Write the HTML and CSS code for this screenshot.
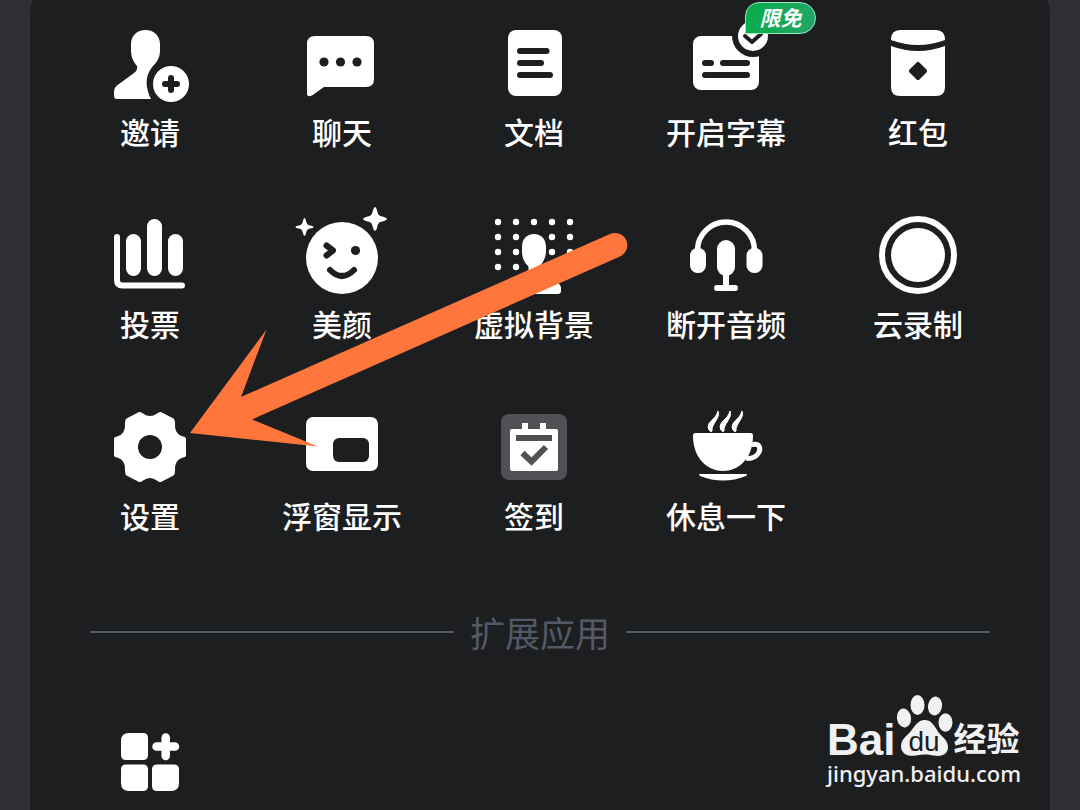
FILE: index.html
```html
<!DOCTYPE html>
<html lang="zh-CN">
<head>
<meta charset="utf-8">
<meta name="viewport" content="width=device-width, initial-scale=1">
<title>会议工具</title>
<link rel="stylesheet" href="styles.css">
</head>
<body>
<main class="panel">
  <section class="grid">
    <button class="tile" type="button">
      <span class="icon"><svg viewBox="102 15 96 96" aria-hidden="true">
        <path d="M145.500 30C154 30 160 36 160 44V50C160 58 157 62 153 66C147 73 146 80 147 87C148 92 149 95 151 99H117Q114 99 114 96V92C114 88 116 86 119 84L134 73Q138 70 137 66C133 61 131 57 131 50V44C131 36 137 30 145.500 30Z"/>
        <circle cx="171" cy="84" r="18"/>
        <path class="cut" stroke-width="6" d="M165 84H177M171 78V90"/>
      </svg></span>
      <span class="label">邀请</span>
    </button>
    <button class="tile" type="button">
      <span class="icon"><svg viewBox="294 15 96 96" aria-hidden="true">
        <path d="M315 36H366Q374 36 374 44V79Q374 87 366 87H324L312 95.500Q307 98 307 93V44Q307 36 315 36Z"/>
        <g class="hole"><circle cx="324" cy="62" r="4.600"/><circle cx="340.500" cy="62" r="4.600"/><circle cx="357" cy="62" r="4.600"/></g>
      </svg></span>
      <span class="label">聊天</span>
    </button>
    <button class="tile" type="button">
      <span class="icon"><svg viewBox="486 15 96 96" aria-hidden="true">
        <rect x="508" y="30" width="54" height="66" rx="8"/>
        <path class="cut" stroke-width="6" d="M520 51H546.500M520 63H541M520 75H550"/>
      </svg></span>
      <span class="label">文档</span>
    </button>
    <button class="tile" type="button">
      <span class="icon"><svg viewBox="678 15 96 96" aria-hidden="true">
        <rect x="693" y="36" width="66" height="54" rx="8"/>
        <circle class="hole" cx="753" cy="36" r="21"/>
        <circle cx="753" cy="36" r="15"/>
        <path class="cut" stroke-width="4" d="M745 36L752 42L761 34"/>
        <path class="cut" stroke-width="6" d="M705 63H711M723 63H747M705 75H747"/>
      </svg><span class="badge">限免</span></span>
      <span class="label">开启字幕</span>
    </button>
    <button class="tile" type="button">
      <span class="icon"><svg viewBox="870 15 96 96" aria-hidden="true">
        <path d="M900 30H936Q945 30 945 40Q918 50 891 40Q891 30 900 30Z"/>
        <path d="M891 46Q918 56 945 46V87Q945 96 936 96H900Q891 96 891 87Z"/>
        <rect class="hole" x="911" y="64" width="14" height="14" rx="2" transform="rotate(45 918 71)"/>
      </svg></span>
      <span class="label">红包</span>
    </button>

    <button class="tile" type="button">
      <span class="icon"><svg viewBox="102 207 96 96" aria-hidden="true">
        <path class="line" stroke-width="6" d="M117 237V280Q117 285.500 122.500 285.500H182"/>
        <rect x="126" y="234" width="15" height="42" rx="7.500"/>
        <rect x="147" y="219" width="15" height="57" rx="7.500"/>
        <rect x="168" y="234" width="15" height="42" rx="7.500"/>
      </svg></span>
      <span class="label">投票</span>
    </button>
    <button class="tile" type="button">
      <span class="icon"><svg viewBox="294 207 96 96" aria-hidden="true">
        <circle cx="342" cy="258" r="36"/>
        <path d="M375 207Q376 207 377 210C378 215 379 216 384 217Q387 218 387 219Q387 220 384 221C379 222 378 223 377 228Q376 231 375 231Q374 231 373 228C372 223 371 222 366 221Q363 220 363 219Q363 218 366 217C371 216 372 215 373 210Q374 207 375 207Z"/>
        <path d="M304.500 218Q305.500 218 306 221C307 224 307.500 225 310 225.500Q313.500 226 313.500 227Q313.500 228 310 228.500C307.500 229 307 230 306 233Q305.500 236 304.500 236Q303.500 236 303 233C302 230 301.500 229 299 228.500Q295.500 228 295.500 227Q295.500 226 299 225.500C301.500 225 302 224 303 221Q303.500 218 304.500 218Z"/>
        <path class="cut" stroke-width="6" d="M326.500 245.500L333 250.500L326.500 255.500"/>
        <circle class="hole" cx="355.500" cy="250.500" r="4.600"/>
        <path class="cut" stroke-width="6" d="M330 270Q342 282 354 270"/>
      </svg></span>
      <span class="label">美颜</span>
    </button>
    <button class="tile" type="button">
      <span class="icon"><svg viewBox="486 207 96 96" aria-hidden="true">
        <path class="line" stroke-width="6.400" stroke-dasharray="0 18" d="M498 222H571M498 237H517M552 237H571M498 252H517M552 252H571M498 267H517M552 267H571"/>
        <path d="M534 234C541 234 546 239 546 247V251C546 258 543 262 540 266Q538 270 542 273L557 282Q561 285 561 288V291Q561 294 558 294H510Q507 294 507 291V288Q507 285 511 282L526 273Q530 270 528 266C524 262 522 258 522 251V247C522 239 527 234 534 234Z"/>
      </svg></span>
      <span class="label">虚拟背景</span>
    </button>
    <button class="tile" type="button">
      <span class="icon"><svg viewBox="678 207 96 96" aria-hidden="true">
        <path class="line" stroke-width="5.500" d="M697.500 252V250.500A28.500 28.500 0 0 1 754.500 250.500V252"/>
        <rect x="690" y="248" width="16" height="25" rx="7.500"/>
        <rect x="746.500" y="248" width="16" height="25" rx="7.500"/>
        <rect x="717" y="240" width="18" height="36" rx="9"/>
        <path class="line" stroke-width="6" d="M726 272V288M717 288H735"/>
      </svg></span>
      <span class="label">断开音频</span>
    </button>
    <button class="tile" type="button">
      <span class="icon"><svg viewBox="870 207 96 96" aria-hidden="true">
        <circle class="line" stroke-width="6" cx="918" cy="255" r="36"/>
        <circle cx="918" cy="255" r="27"/>
      </svg></span>
      <span class="label">云录制</span>
    </button>

    <button class="tile" type="button">
      <span class="icon"><svg viewBox="102 399 96 96" aria-hidden="true">
        <path d="M139 412Q141 411.500 143 413.500Q150 418.500 157 413.500Q159 411.500 161 412L173.500 418.500Q175 419.500 175 423Q174 434 183 436.500Q186 437 186 439V455Q186 457 183 457.500Q174 460 175 471Q175 474.500 173.500 475.500L161 482Q159 482.500 157 480.500Q150 475.500 143 480.500Q141 482.500 139 482L126.500 475.500Q125 474.500 125 471Q126 460 117 457.500Q114 457 114 455V439Q114 437 117 436.500Q126 434 125 423Q125 419.500 126.500 418.500Z"/>
        <circle class="hole" cx="150" cy="447" r="12"/>
      </svg></span>
      <span class="label">设置</span>
    </button>
    <button class="tile" type="button">
      <span class="icon"><svg viewBox="294 399 96 96" aria-hidden="true">
        <rect x="306" y="417" width="72" height="54" rx="7"/>
        <rect class="hole" x="333" y="438" width="36" height="24" rx="6"/>
      </svg></span>
      <span class="label">浮窗显示</span>
    </button>
    <button class="tile" type="button">
      <span class="icon"><svg viewBox="486 399 96 96" aria-hidden="true">
        <rect class="plate" x="501" y="414" width="66" height="66" rx="8"/>
        <path d="M512 429H522V423H528V429H540V423H546V429H556Q558 429 558 431V469Q558 471 556 471H512Q510 471 510 469V431Q510 429 512 429Z"/>
        <rect class="plate" x="516" y="435" width="36" height="6"/>
        <path class="tick" d="M522.500 453L531.500 461.500L546 447"/>
      </svg></span>
      <span class="label">签到</span>
    </button>
    <button class="tile" type="button">
      <span class="icon"><svg viewBox="678 399 96 96" aria-hidden="true">
        <path d="M695 433H751Q753 433 753 435.500C753 459 738 471 723 471C708 471 693 459 693 435.500Q693 433 695 433Z"/>
        <path class="line" stroke-width="5" d="M753 444.500C760 443 761 449 758.500 453C756 457 752 458.500 748 458.500"/>
        <path d="M700 474H746Q748 474 746 476C738 479 731 480.500 723 480.500C715 480.500 708 479 700 476Q698 474 700 474Z"/>
        <g class="steam"><path d="M718 411C721 418 711 424 712 431Q711 433 709 430C705 422 716 420 718 411Z"/><path d="M730 411C733 418 723 424 724 431Q723 433 721 430C717 422 728 420 730 411Z"/><path d="M742 411C745 418 735 424 736 431Q735 433 733 430C729 422 740 420 742 411Z"/></g>
      </svg></span>
      <span class="label">休息一下</span>
    </button>
  </section>

  <h2 class="divider">扩展应用</h2>

  <section class="grid">
    <button class="tile" type="button" aria-label="添加应用">
      <span class="icon"><svg viewBox="102 714 96 96" aria-hidden="true">
        <path d="M129 733H143Q148 733 148 738V755Q148 760 143 760H126Q121 760 121 755V741Q121 733 129 733Z"/>
        <path d="M126 764.500H143Q148 764.500 148 769.500V786Q148 791 143 791H129Q121 791 121 783V769.500Q121 764.500 126 764.500Z"/>
        <path d="M157 764.500H174Q179 764.500 179 769.500V783Q179 791 171 791H157Q152 791 152 786V769.500Q152 764.500 157 764.500Z"/>
        <path class="line" stroke-width="8.500" d="M156.500 746.500H175M165.700 737.500V756"/>
      </svg></span>
    </button>
  </section>

  <svg class="arrow" viewBox="180 220 460 240" aria-hidden="true">
    <path d="M190 433L266.500 329.500L241 397L610 234A12.200 12.200 0 0 1 620 256.500L252 419.500L318 446.500Z"/>
  </svg>

  <div class="brand">
    <div class="brand-row">
      <span class="brand-name">Bai</span>
      <svg class="paw" viewBox="894 694 58 64" role="img" aria-label="du">
        <ellipse cx="902" cy="718" rx="7" ry="9.500" transform="rotate(-8 902 718)"/>
        <ellipse cx="915.500" cy="705" rx="7" ry="10"/>
        <ellipse cx="933" cy="706" rx="7" ry="9.500" transform="rotate(10 933 706)"/>
        <ellipse cx="943.500" cy="722.500" rx="7" ry="9.200"/>
        <path d="M922.500 720C929 720 932 725 935 730C938 736 946 739 946 747C946 755 938 757 932 755.500C925 754 920 754 914 755.500C906 757 899 754 899 746C899 739 905 736 909 731C913 726 916 720 922.500 720Z"/>
        <text class="du" x="922" y="751" text-anchor="middle">du</text>
      </svg>
      <span class="brand-cn">经验</span>
    </div>
    <div class="brand-url">jingyan.baidu.com</div>
  </div>
</main>
</body>
</html>
```
FILE: styles.css
```css
* {
  box-sizing: border-box;
}

body {
  margin: 0;
  background: #2f3035;
  font-family: "Noto Sans CJK SC", sans-serif;
}

.panel {
  position: relative;
  min-height: 100vh;
  margin: 0 30px;
  padding: 15px 0 0;
  background: #1d1e20;
  border-radius: 4px 4px 0 0 / 16px 16px 0 0;
}

.grid {
  display: grid;
  grid-template-columns: repeat(5, 1fr);
  row-gap: 56px;
  padding: 0 36px 0 24px;
}

.tile {
  display: flex;
  flex-direction: column;
  align-items: center;
  padding: 0;
  border: 0;
  background: none;
  color: #fff;
  font: inherit;
  cursor: pointer;
}

.icon {
  position: relative;
  width: 96px;
  height: 96px;
}

.icon svg {
  display: block;
  width: 100%;
  height: 100%;
  fill: #fff;
}

.icon .hole {
  fill: #1d1e20;
}

.icon .cut,
.icon .line {
  fill: none;
  stroke: #fff;
  stroke-linecap: round;
  stroke-linejoin: round;
}

.icon .cut {
  stroke: #1d1e20;
}

.icon .steam {
  stroke: #fff;
  stroke-linejoin: round;
}

.icon .plate {
  fill: #505155;
}

.icon .tick {
  fill: none;
  stroke: #505155;
  stroke-width: 6;
}

.label {
  font-size: 30px;
  font-weight: 500;
  line-height: 40px;
  white-space: nowrap;
}

.badge {
  position: absolute;
  top: -13px;
  left: 67px;
  width: 71px;
  height: 32px;
  border: 1px solid #9be8bd;
  border-radius: 14px 16px 16px 0;
  background: linear-gradient(90deg, #09ac4c, #22a565);
  font-size: 21px;
  font-style: italic;
  font-weight: 700;
  line-height: 28px;
  text-align: center;
}

.divider {
  display: flex;
  align-items: center;
  gap: 16px;
  margin: 73px 60px 58px;
  color: #545968;
  font-size: 35px;
  font-weight: 400;
  line-height: 48px;
}

.divider::before,
.divider::after {
  flex: 1;
  height: 2px;
  background: #545968;
  content: "";
}

.arrow {
  position: absolute;
  top: 220px;
  left: 150px;
  width: 460px;
  height: 240px;
  fill: #ff763d;
  pointer-events: none;
}

.brand {
  position: absolute;
  top: 694px;
  right: 29px;
  color: #f1f1f3;
}

.brand-row {
  display: flex;
  align-items: flex-end;
  height: 64px;
}

.brand-name {
  font-family: "Liberation Sans", sans-serif;
  font-size: 44px;
  font-weight: 700;
  line-height: 36px;
}

.paw {
  width: 58px;
  height: 64px;
  fill: #f1f1f3;
}

.paw .du {
  fill: #1d1e20;
  font-family: "Liberation Sans", sans-serif;
  font-size: 28px;
}

.brand-cn {
  font-family: "Liberation Sans", "Noto Sans CJK SC", sans-serif;
  font-size: 33px;
  font-weight: 700;
  line-height: 36px;
}

.brand-url {
  font-family: "Noto Sans", sans-serif;
  font-size: 22px;
  font-weight: 500;
  line-height: 30px;
}
```
